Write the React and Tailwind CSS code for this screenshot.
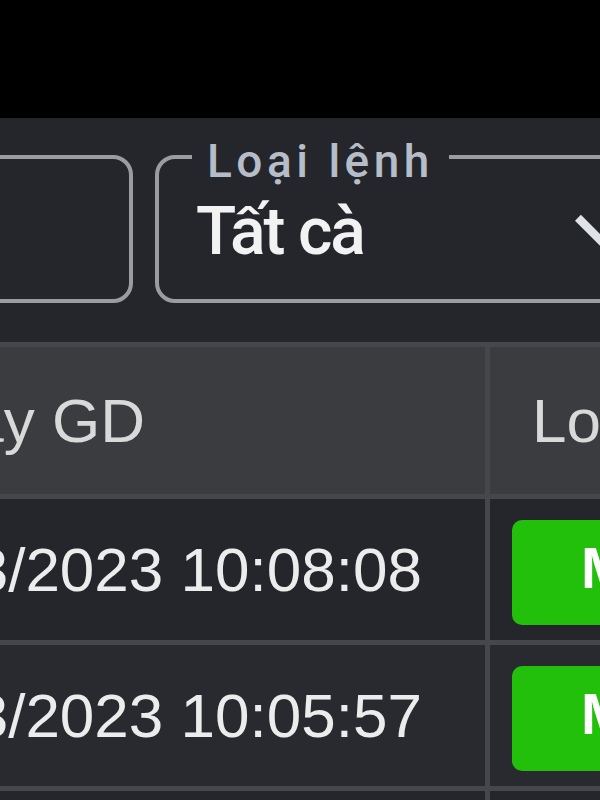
import React from "react";

const rows = [
  { date: "15/03/2023 10:08:08", side: "Mua", bg: "bg-[#25262b]" },
  { date: "15/03/2023 10:05:57", side: "Mua", bg: "bg-[#292a2f]" },
  { date: "15/03/2023 09:58:12", side: "Mua", bg: "bg-[#25262b]" },
];

const ChevronDown = ({ className }) => (
  <svg viewBox="0 0 24 24" className={className} fill="currentColor">
    <path d="M16.59 8.59 12 13.17 7.41 8.59 6 10l6 6 6-6z" />
  </svg>
);

const FilterBox = ({ label, value, className }) => (
  <div
    className={`relative h-[148px] shrink-0 rounded-[20px] border-4 border-[#9b9c9f] ${className}`}
  >
    {label && (
      <span className="absolute -top-[21px] left-[33px] bg-[#25262b] px-[15px] font-['Roboto',sans-serif] text-[46px] font-medium leading-[46px] tracking-[4.5px] text-[#b4bdc8]">
        {label}
      </span>
    )}
    {value && (
      <>
        <div className="pl-[37px] pt-[40px] font-['Roboto',sans-serif] text-[66px] font-medium leading-[66px] tracking-[-2px] text-[#f2f2f2]">
          {value}
        </div>
        <ChevronDown className="absolute left-[391px] top-[20px] h-[100px] w-[100px] text-[#dfe2e6]" />
      </>
    )}
  </div>
);

const OrderHistory = () => {
  return (
    <div className="h-[800px] w-[600px] overflow-hidden bg-black font-['Liberation_Sans',Arial,sans-serif]">
      <div className="h-[118px] bg-black" />

      <div className="h-[224px] bg-[#25262b] pt-[37px]">
        <div className="-ml-[167px] flex w-max gap-[22px]">
          <FilterBox className="w-[300px]" />
          <FilterBox className="w-[520px]" label="Loại lệnh" value="Tất cà" />
        </div>
      </div>

      <div className="-ml-[200px] w-[1000px] border-t-[5px] border-[#46474b]">
        <div className="flex h-[152px] border-b-[5px] border-[#46474b] bg-[#3b3c3f] text-[62px] leading-none text-[#d9d9d9]">
          <div className="flex w-[690px] shrink-0 items-center border-r-[5px] border-[#46474b] pl-[90px]">
            Ngày GD
          </div>
          <div className="flex flex-1 items-center pl-[42px]">Loại lệnh</div>
        </div>

        {rows.map((row, i) => (
          <div
            key={i}
            className={`flex h-[146px] border-b-[5px] border-[#46474b] ${row.bg}`}
          >
            <div className="flex w-[690px] shrink-0 items-center border-r-[5px] border-[#46474b] pl-[53px] text-[62px] leading-none text-[#ececec]">
              {row.date}
            </div>
            <div className="flex-1 pl-[22px] pt-[21px]">
              <div className="flex h-[105px] w-[220px] items-center rounded-[10px] bg-[#22c00b] pb-[8px] pl-[69px] text-[57px] font-bold leading-none text-white">
                {row.side}
              </div>
            </div>
          </div>
        ))}
      </div>
    </div>
  );
};

export default OrderHistory;
